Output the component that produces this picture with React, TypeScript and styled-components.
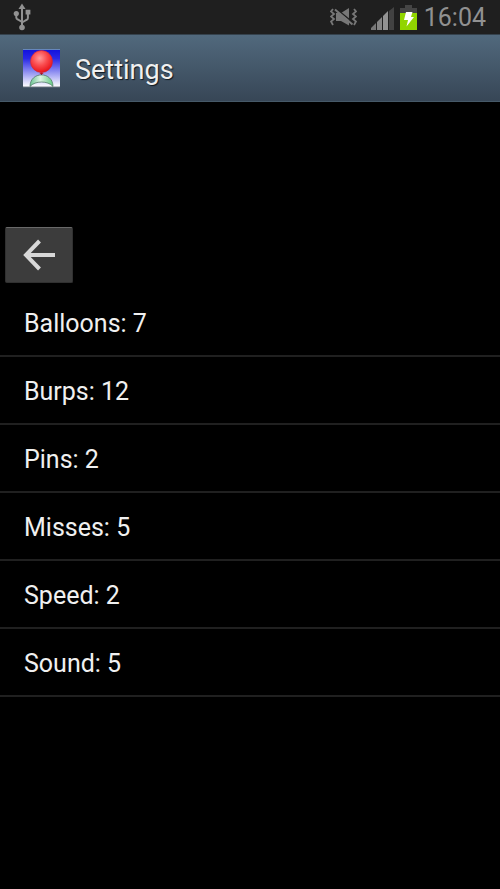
import React from "react";
import styled, { createGlobalStyle } from "styled-components";

const GlobalStyle = createGlobalStyle`
  * { box-sizing: border-box; }
  body {
    margin: 0;
    background: #000;
    color: #f0f0f0;
    font-family: Roboto, sans-serif;
  }
`;

const Screen = styled.div`
  display: flex;
  flex-direction: column;
  min-height: 100vh;
`;

const StatusBar = styled.div`
  display: flex;
  align-items: center;
  justify-content: space-between;
  height: 34px;
  padding: 0 14px 0 13px;
  background: #1f1f1f;
`;

const StatusIcons = styled.div`
  display: flex;
  align-items: center;
`;

const Clock = styled.time`
  margin-left: 7px;
  padding-top: 2px;
  color: #919191;
  font-size: 25px;
  line-height: 32px;
`;

const TitleBar = styled.header`
  display: flex;
  align-items: center;
  gap: 14px;
  height: 68px;
  padding: 0 22px;
  background: linear-gradient(#51697d, #374656);
  border-top: 1px solid #35424d;
  border-bottom: 1px solid #465968;
`;

const Title = styled.h1`
  margin: 0;
  padding-top: 4px;
  font-size: 27px;
  font-weight: 400;
  line-height: 32px;
  text-shadow: 1px 1px 1px #101820;
`;

const Content = styled.main`
  padding-top: 125px;
`;

const BackButton = styled.button`
  display: flex;
  align-items: center;
  justify-content: center;
  width: 68px;
  height: 56px;
  margin: 0 5px 6px;
  padding: 0;
  background: #3c3c3c;
  border: 1px solid #303030;
  border-top-color: #696969;
  border-radius: 2px;
`;

const SettingsList = styled.ul`
  margin: 0;
  padding: 0;
  list-style: none;
`;

const SettingRow = styled.li`
  border-bottom: 2px solid #202020;
`;

const SettingButton = styled.button`
  display: block;
  width: 100%;
  padding: 19px 24px 15px;
  background: none;
  border: 0;
  color: inherit;
  font-family: inherit;
  font-size: 25px;
  line-height: 32px;
  text-align: left;
`;

const UsbIcon = () => (
  <svg width="18" height="30" viewBox="0 0 18 30" fill="#929292" role="img" aria-label="USB connected">
    <path d="M9 1.5 12.5 7h-7z" />
    <circle cx="9" cy="25.5" r="2.8" />
    <circle cx="3.3" cy="11.5" r="2.6" />
    <path d="M12.6 7.8h4.8v4.8h-4.8z" />
    <path d="M9 6v19M3.3 12v3.5q0 1.5 1.5 2L9 20M14.9 12v4q0 1.5-1.5 2L9 20.5" fill="none" stroke="#929292" strokeWidth="2" />
  </svg>
);

const MutedIcon = () => (
  <svg width="27" height="20" viewBox="0 0 27 20" role="img" aria-label="Sound off">
    <path d="M6 6h5L19 1v17.5L11 14H6z" fill="#777" />
    <path d="M3 2 1 4.5 4 7 1 9.5 4 12 1 14.5 3 18M24 2l2 2.5L23 7l3 2.5-3 2.5 3 2.5-2 3.5" fill="none" stroke="#777" strokeWidth="1.8" />
    <path d="m6.5 2 16.5 13.5" stroke="#1f1f1f" strokeWidth="1.6" />
    <path d="m5 2.5 17.5 15" stroke="#777" strokeWidth="2" />
  </svg>
);

const SignalIcon = () => (
  <svg width="23" height="23" viewBox="0 0 23 23" role="img" aria-label="Signal strength">
    <path d="M0 23v-2l5-5v7z" fill="#777" />
    <path d="M6 23v-8l5-5v13z" fill="#858585" />
    <path d="M12 23V9l5-5v19z" fill="#929292" />
    <path d="M18 23V4l5-4v23z" fill="#424242" />
  </svg>
);

const BatteryIcon = () => (
  <svg width="17" height="25" viewBox="0 0 17 25" role="img" aria-label="Battery charging">
    <path d="M5 0h7v3h5v5H0V3h5z" fill="#454545" />
    <path d="M0 8h17v17H0z" fill="#91d500" />
    <path d="M6 7h6.5l-1.5 5h3L6.5 21.5 8 15H4z" fill="#fff" />
  </svg>
);

const BalloonLogo = () => (
  <svg width="39" height="39" viewBox="0 0 39 39" aria-hidden="true">
    <defs>
      <linearGradient id="sky" x1="0" y1="0" x2="0" y2="1">
        <stop offset="0" stopColor="#1010dc" />
        <stop offset=".25" stopColor="#2828e4" />
        <stop offset=".85" stopColor="#d8d8fa" />
        <stop offset="1" stopColor="#fff" />
      </linearGradient>
      <radialGradient id="rubber" cx=".42" cy=".35" r=".65">
        <stop offset="0" stopColor="#ff9a9a" />
        <stop offset=".5" stopColor="#fa4d50" />
        <stop offset="1" stopColor="#e8131a" />
      </radialGradient>
      <linearGradient id="hill">
        <stop offset="0" stopColor="#69c391" />
        <stop offset=".45" stopColor="#dcf3e3" />
        <stop offset="1" stopColor="#63ca83" />
      </linearGradient>
    </defs>
    <rect x="1" y="0" width="37" height="38" rx="1" fill="url(#sky)" />
    <path d="M1 .5h37" stroke="#6687bd" />
    <path d="M1 37.7h37" stroke="#a8adb5" />
    <path d="M8 37.5c0-15.5 23-15.5 23 0-5-6-18-6-23 0z" fill="url(#hill)" stroke="#456f59" strokeWidth=".7" />
    <path d="m19.5 22-2 3h4z" fill="#d41e29" />
    <path d="M19.5 24v2" stroke="#8a2837" />
    <circle cx="19.5" cy="12.5" r="11" fill="url(#rubber)" stroke="#c82840" strokeWidth=".6" />
  </svg>
);

const BackArrow = () => (
  <svg width="34" height="32" viewBox="0 0 34 32" fill="none" stroke="#d8d8d8" strokeWidth="4" aria-hidden="true">
    <path d="M17.5 2 4 16l13.5 14M4 16h29" />
  </svg>
);

const settings = [
  { name: "Balloons", value: 7 },
  { name: "Burps", value: 12 },
  { name: "Pins", value: 2 },
  { name: "Misses", value: 5 },
  { name: "Speed", value: 2 },
  { name: "Sound", value: 5 },
];

const SignalSlot = styled.span`
  display: flex;
  margin: 2px 6px 0 14px;
`;

const BatterySlot = styled.span`
  display: flex;
`;

export default function App() {
  return (
    <Screen>
      <GlobalStyle />
      <StatusBar>
        <UsbIcon />
        <StatusIcons>
          <MutedIcon />
          <SignalSlot><SignalIcon /></SignalSlot>
          <BatterySlot><BatteryIcon /></BatterySlot>
          <Clock>16:04</Clock>
        </StatusIcons>
      </StatusBar>
      <TitleBar>
        <BalloonLogo />
        <Title>Settings</Title>
      </TitleBar>
      <Content>
        <BackButton type="button" aria-label="Back"><BackArrow /></BackButton>
        <SettingsList>
          {settings.map(({ name, value }) => (
            <SettingRow key={name}>
              <SettingButton type="button">{`${name}: ${value}`}</SettingButton>
            </SettingRow>
          ))}
        </SettingsList>
      </Content>
    </Screen>
  );
}
